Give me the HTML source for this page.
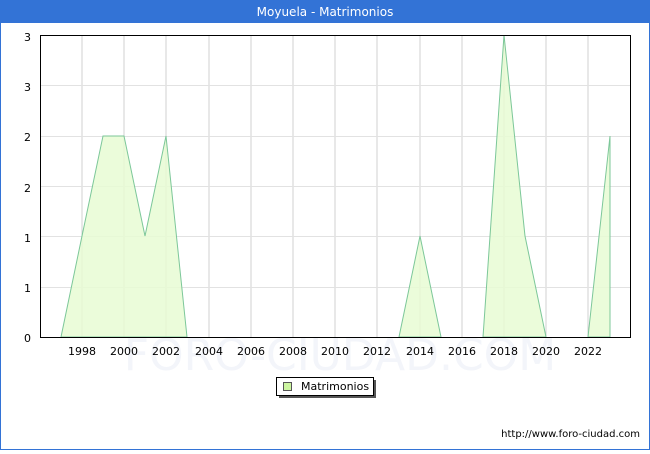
<!DOCTYPE html>
<html><head><meta charset="utf-8"><style>
body{margin:0;width:650px;height:450px;overflow:hidden;font-family:"DejaVu Sans","Liberation Sans",sans-serif;}
</style></head><body>
<svg width="650" height="450" xmlns="http://www.w3.org/2000/svg" font-family="DejaVu Sans, Liberation Sans, sans-serif">
<rect x="0" y="0" width="650" height="450" fill="#fff"/>
<rect x="0.5" y="0.5" width="649" height="449" fill="none" stroke="#3373d6"/>
<rect x="0" y="0" width="650" height="23" fill="#3373d6"/>
<text x="325" y="16" font-size="12" fill="#fff" text-anchor="middle">Moyuela - Matrimonios</text>
<g stroke="#d0d0d0" stroke-width="1">
<line x1="82" y1="35" x2="82" y2="337"/><line x1="124" y1="35" x2="124" y2="337"/><line x1="166" y1="35" x2="166" y2="337"/><line x1="209" y1="35" x2="209" y2="337"/><line x1="251" y1="35" x2="251" y2="337"/><line x1="293" y1="35" x2="293" y2="337"/><line x1="335" y1="35" x2="335" y2="337"/><line x1="377" y1="35" x2="377" y2="337"/><line x1="420" y1="35" x2="420" y2="337"/><line x1="462" y1="35" x2="462" y2="337"/><line x1="504" y1="35" x2="504" y2="337"/><line x1="546" y1="35" x2="546" y2="337"/><line x1="588" y1="35" x2="588" y2="337"/>
</g>
<g stroke="#e2e2e2"><line x1="40" y1="85.5" x2="630" y2="85.5"/><line x1="40" y1="136.5" x2="630" y2="136.5"/><line x1="40" y1="186.5" x2="630" y2="186.5"/><line x1="40" y1="236.5" x2="630" y2="236.5"/><line x1="40" y1="287.5" x2="630" y2="287.5"/></g>
<text x="340" y="370" font-size="44" fill="#f3f5fa" text-anchor="middle">FORO-CIUDAD.COM</text>
<g fill="#e8fcd4" fill-opacity="0.85" stroke="#7cc799" stroke-width="1">
<polygon points="61,337 82,236 103,136 124,136 145,236 166,136 187,337"/>
<polygon points="399,337 420,236 441,337"/>
<polygon points="483,337 504,35 525,236 546,337"/>
<polygon points="588,337 610,136 610,337" />
</g>
<rect x="40.5" y="35.5" width="590" height="302" fill="none" stroke="#000"/>
<g font-size="11" fill="#000" text-anchor="end">
<text x="31" y="41">3</text><text x="31" y="91">3</text><text x="31" y="141">2</text><text x="31" y="192">2</text><text x="31" y="242">1</text><text x="31" y="292">1</text><text x="31" y="342">0</text>
</g>
<g font-size="11" fill="#000" text-anchor="middle">
<text x="82" y="355">1998</text><text x="124" y="355">2000</text><text x="166" y="355">2002</text><text x="209" y="355">2004</text><text x="251" y="355">2006</text><text x="293" y="355">2008</text><text x="335" y="355">2010</text><text x="377" y="355">2012</text><text x="420" y="355">2014</text><text x="462" y="355">2016</text><text x="504" y="355">2018</text><text x="546" y="355">2020</text><text x="588" y="355">2022</text>
</g>
<rect x="279" y="380" width="97" height="18" fill="#555"/>
<rect x="276.5" y="377.5" width="97" height="18" fill="#fff" stroke="#000"/>
<rect x="283.5" y="382.5" width="8" height="8" fill="#ccf5a0" stroke="#555"/>
<text x="301" y="390" font-size="11" fill="#000">Matrimonios</text>
<text x="640" y="437" font-size="10" fill="#000" text-anchor="end">http://www.foro-ciudad.com</text>
</svg>
</body></html>
